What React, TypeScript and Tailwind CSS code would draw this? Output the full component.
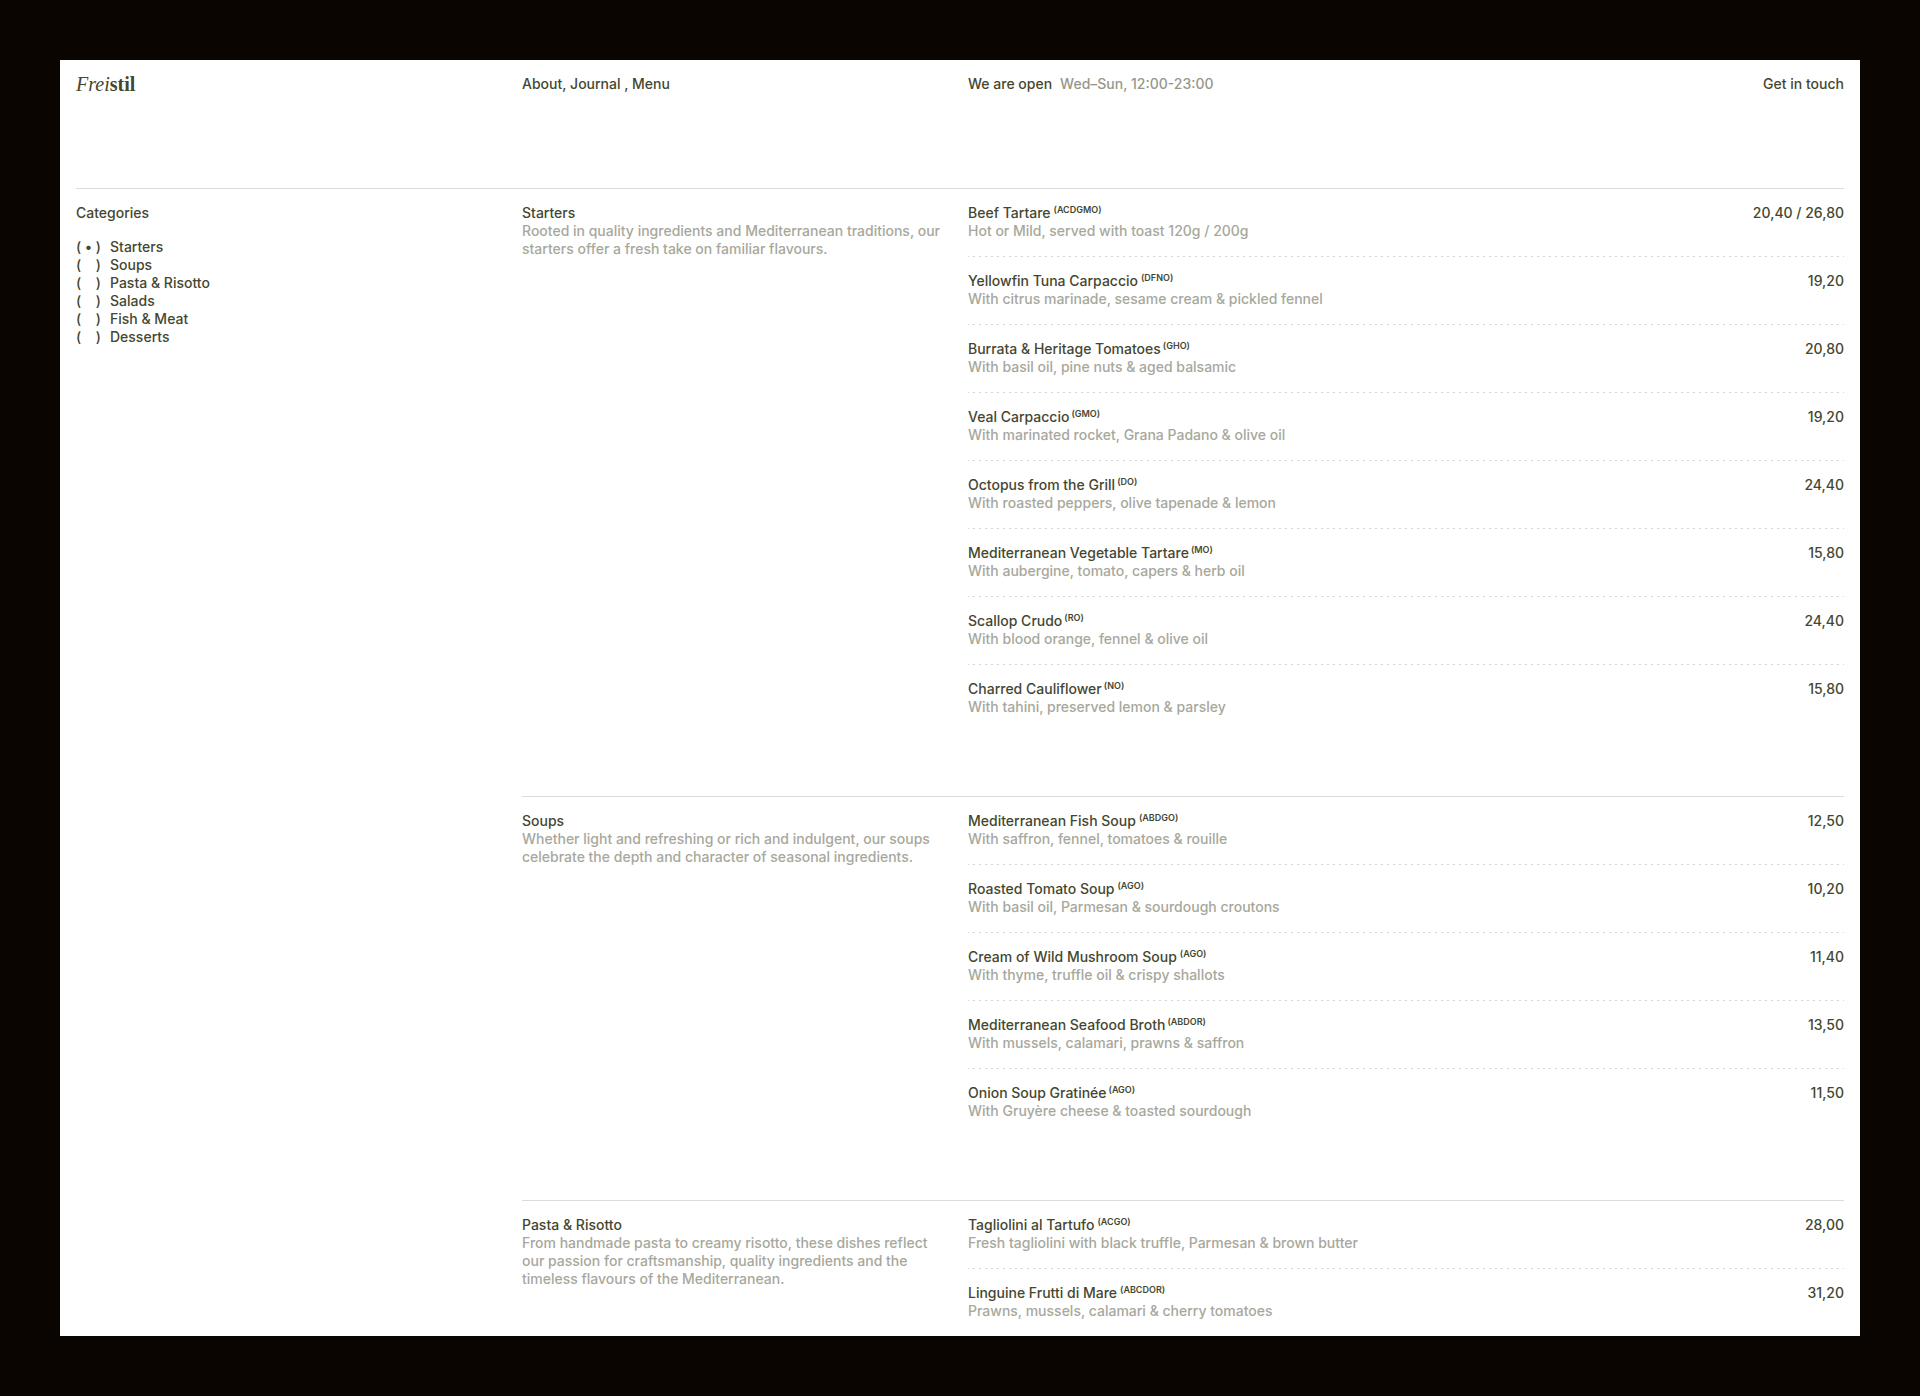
import React, { useState } from 'react';

interface Dish {
  name: string;
  allergens: string;
  description: string;
  price: string;
  tight?: boolean;
}

interface Section {
  title: string;
  description: string;
  dishes: Dish[];
}

const categories = ['Starters', 'Soups', 'Pasta & Risotto', 'Salads', 'Fish & Meat', 'Desserts'];

const sections: Section[] = [
  {
    title: 'Starters',
    description: 'Rooted in quality ingredients and Mediterranean traditions, our starters offer a fresh take on familiar flavours.',
    dishes: [
      { name: 'Beef Tartare', allergens: 'ACDGMO', description: 'Hot or Mild, served with toast 120g / 200g', price: '20,40 / 26,80' },
      { name: 'Yellowfin Tuna Carpaccio', allergens: 'DFNO', description: 'With citrus marinade, sesame cream & pickled fennel', price: '19,20' },
      { name: 'Burrata & Heritage Tomatoes', allergens: 'GHO', description: 'With basil oil, pine nuts & aged balsamic', price: '20,80', tight: true },
      { name: 'Veal Carpaccio', allergens: 'GMO', description: 'With marinated rocket, Grana Padano & olive oil', price: '19,20', tight: true },
      { name: 'Octopus from the Grill', allergens: 'DO', description: 'With roasted peppers, olive tapenade & lemon', price: '24,40', tight: true },
      { name: 'Mediterranean Vegetable Tartare', allergens: 'MO', description: 'With aubergine, tomato, capers & herb oil', price: '15,80', tight: true },
      { name: 'Scallop Crudo', allergens: 'RO', description: 'With blood orange, fennel & olive oil', price: '24,40', tight: true },
      { name: 'Charred Cauliflower', allergens: 'NO', description: 'With tahini, preserved lemon & parsley', price: '15,80', tight: true },
    ],
  },
  {
    title: 'Soups',
    description: 'Whether light and refreshing or rich and indulgent, our soups celebrate the depth and character of seasonal ingredients.',
    dishes: [
      { name: 'Mediterranean Fish Soup', allergens: 'ABDGO', description: 'With saffron, fennel, tomatoes & rouille', price: '12,50' },
      { name: 'Roasted Tomato Soup', allergens: 'AGO', description: 'With basil oil, Parmesan & sourdough croutons', price: '10,20' },
      { name: 'Cream of Wild Mushroom Soup', allergens: 'AGO', description: 'With thyme, truffle oil & crispy shallots', price: '11,40' },
      { name: 'Mediterranean Seafood Broth', allergens: 'ABDOR', description: 'With mussels, calamari, prawns & saffron', price: '13,50', tight: true },
      { name: 'Onion Soup Gratinée', allergens: 'AGO', description: 'With Gruyère cheese & toasted sourdough', price: '11,50', tight: true },
    ],
  },
  {
    title: 'Pasta & Risotto',
    description: 'From handmade pasta to creamy risotto, these dishes reflect our passion for craftsmanship, quality ingredients and the timeless flavours of the Mediterranean.',
    dishes: [
      { name: 'Tagliolini al Tartufo', allergens: 'ACGO', description: 'Fresh tagliolini with black truffle, Parmesan & brown butter', price: '28,00' },
      { name: 'Linguine Frutti di Mare', allergens: 'ABCDOR', description: 'Prawns, mussels, calamari & cherry tomatoes', price: '31,20' },
    ],
  },
];

const Header: React.FC = () => (
  <header className="grid grid-cols-4 gap-4 items-start h-32 pt-[15px]">
    <a href="#" className="font-['Liberation_Serif',serif] text-xl leading-[18px]">
      <em>Frei</em><span className="font-bold">stil</span>
    </a>
    <nav>
      <a href="#about">About</a>, <a href="#journal">Journal</a> , <a href="#menu">Menu</a>
    </nav>
    <p className="flex gap-2">
      <span>We are open</span>
      <span className="text-[#96978b]">Wed–Sun, 12:00-23:00</span>
    </p>
    <a href="#contact" className="justify-self-end">Get in touch</a>
  </header>
);

const CategoryFilter: React.FC = () => {
  const [active, setActive] = useState('Starters');

  return (
    <fieldset className="pt-[15px]">
      <legend className="float-left w-full mb-4">Categories</legend>
      {categories.map((category) => (
        <label key={category} className="clear-both flex gap-[9px] cursor-pointer">
          <input
            type="radio"
            name="category"
            checked={active === category}
            onChange={() => setActive(category)}
            className="sr-only"
          />
          <span className="flex justify-between w-[25px]" aria-hidden="true">
            <span>(</span>
            {active === category && <span>•</span>}
            <span>)</span>
          </span>
          <span>{category}</span>
        </label>
      ))}
    </fieldset>
  );
};

// Dashed rule is a repeating gradient so the dash rhythm stays fixed at 6px
const DishRow: React.FC<{ dish: Dish; first: boolean }> = ({ dish, first }) => (
  <li>
    <div
      className={
        first
          ? 'h-px'
          : 'h-px bg-[repeating-linear-gradient(90deg,#d6d6d2_0_1px,transparent_1px_5px,#d6d6d2_5px_6px)]'
      }
    />
    <div className="flex justify-between gap-4 pt-[15px] pb-4">
      <div>
        <h3 className={dish.tight ? 'flex items-start gap-0.5' : 'flex items-start gap-[3px]'}>
          {dish.name}
          <sup className="static pt-px text-[9px] leading-[10px] font-semibold">({dish.allergens})</sup>
        </h3>
        <p className="text-[#a7a89c]">{dish.description}</p>
      </div>
      <span>{dish.price}</span>
    </div>
  </li>
);

const MenuSection: React.FC<{ section: Section; first: boolean }> = ({ section, first }) => (
  <section className={`grid grid-cols-3 gap-4 border-t ${first ? 'border-transparent' : 'border-[#dcdcd6]'}`}>
    <div className="pt-[15px]">
      <h2>{section.title}</h2>
      <p className="text-[#a7a89c]">{section.description}</p>
    </div>
    <ul className="col-span-2 -mt-px">
      {section.dishes.map((dish, i) => (
        <DishRow key={dish.name} dish={dish} first={i === 0} />
      ))}
    </ul>
  </section>
);

const App: React.FC = () => (
  <div className="min-h-screen bg-[#0a0501] p-[60px]">
    <div className="bg-white px-4 font-['Inter',sans-serif] font-medium text-sm leading-[18px] text-[#444730]">
      <Header />
      <main className="grid grid-cols-4 gap-4 border-t border-[#dcdcd6]">
        <CategoryFilter />
        <div className="col-span-3 -mt-px flex flex-col gap-16">
          {sections.map((section, i) => (
            <MenuSection key={section.title} section={section} first={i === 0} />
          ))}
        </div>
      </main>
    </div>
  </div>
);

export default App;
